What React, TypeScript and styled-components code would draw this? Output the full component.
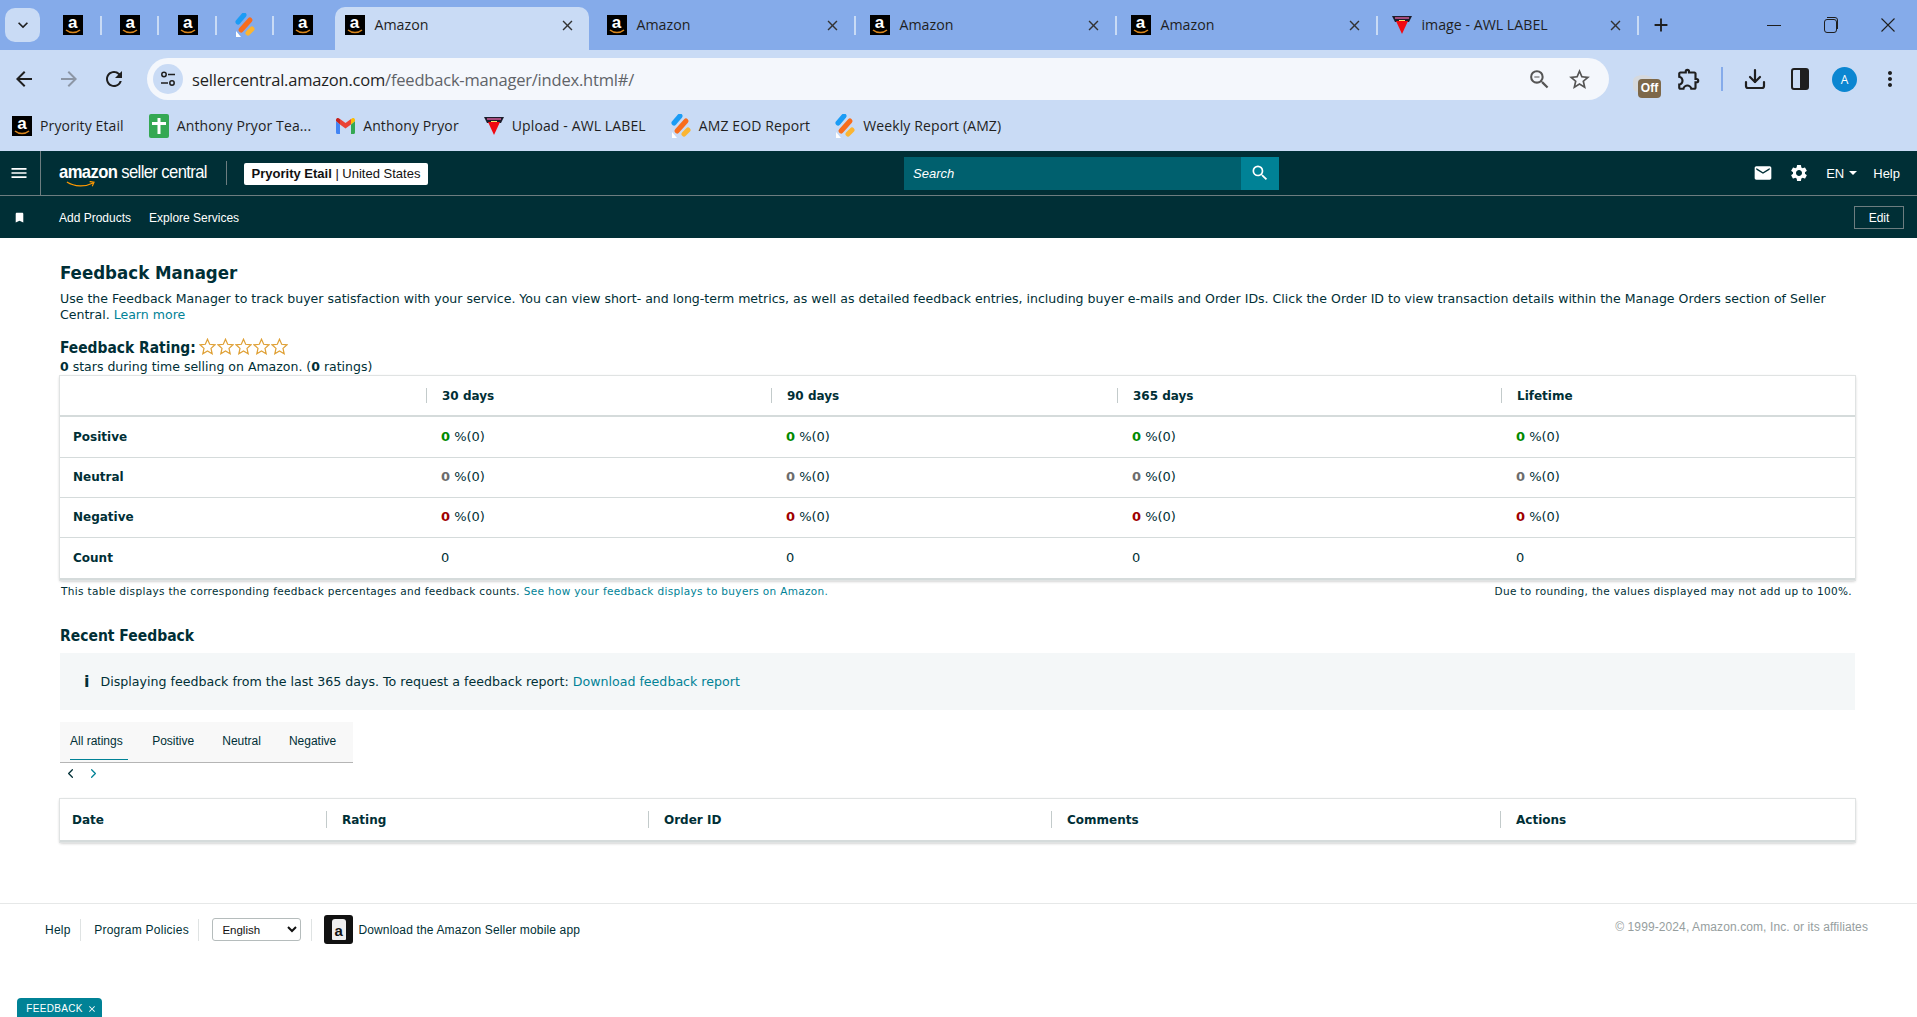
import React from "react";
import styled, { createGlobalStyle } from "styled-components";
import {
    MdArrowBack,
    MdArrowForward,
    MdBookmark,
    MdClose,
    MdExpandMore,
    MdMail,
    MdMenu,
    MdMoreVert,
    MdOutlineExtension,
    MdRefresh,
    MdSearch,
    MdSettings,
    MdStarBorder,
    MdZoomOut,
    MdAdd,
} from "react-icons/md";
import { ChevronLeft, ChevronRight, Download } from "lucide-react";

const TEXT = "#002f36";
const LINK = "#008296";
const CHROME_FONT = `"Open Sans", "Noto Sans", sans-serif`;
const BODY_FONT = `"DejaVu Sans", Verdana, sans-serif`;
const UI_FONT = `"Liberation Sans", Arial, sans-serif`;

const GlobalStyle = createGlobalStyle`
    html, body {
        margin: 0;
        padding: 0;
        background: #fff;
        overflow: hidden;
    }
    #root {
        height: 1017px;
    }
`;

/* favicons */
const AmazonBox = styled.span`
    position: relative;
    display: inline-flex;
    flex: none;
    justify-content: center;
    width: 20px;
    height: 20px;
    background: #000;
    color: #fff;
    font: bold 17px/16px "Liberation Sans", sans-serif;
    > svg {
        position: absolute;
        left: 2px;
        bottom: 1px;
        width: 16px;
        height: 5px;
    }
`;

const AmazonIcon = () => (
    <AmazonBox>
        a
        <svg viewBox="0 0 16 5">
            <path d="M1 1c4 3.400 10 3.400 14 0" fill="none" stroke="#d9861c" strokeWidth="1.600" />
        </svg>
    </AmazonBox>
);

const BarsIcon = () => (
    <svg width="20" height="24" viewBox="0 0 20 24">
        <path d="M3 9 9 2" stroke="#1b9cf5" strokeWidth="5" strokeLinecap="round" />
        <path d="M6 17 15 7" stroke="#f96d1c" strokeWidth="5" strokeLinecap="round" />
        <path d="M13 20 17 16" stroke="#fbb531" strokeWidth="5" strokeLinecap="round" />
        <path d="M1 24v-6l5 6z" fill="#fff" />
    </svg>
);

const AwlIcon = () => (
    <svg width="20" height="20" viewBox="0 0 20 20">
        <path d="M0 1h20l-3 6H3z" fill="#1d1d2b" />
        <path d="M4 6h12l-6 13z" fill="#f00a12" />
        <path d="M3 3h14" stroke="#e2619f" strokeWidth="1.400" />
        <path d="M7 5.500h6" stroke="#f5e66b" strokeWidth="1" />
    </svg>
);

const PlusSheetIcon = () => (
    <svg width="20" height="24" viewBox="0 0 20 24">
        <rect width="20" height="24" rx="2" fill="#34a853" />
        <path d="M10 4v16M3 9.500h14" stroke="#fff" strokeWidth="3" />
    </svg>
);

const GmailIcon = () => (
    <svg width="19" height="16" viewBox="0 0 19 16">
        <path d="M0 3v11.500c0 .8.600 1.500 1.400 1.500H4V6.500z" fill="#4285f4" />
        <path d="M15 6.500V16h2.600c.8 0 1.400-.7 1.400-1.500V3z" fill="#34a853" />
        <path d="M4 6.500 9.500 10.500 15 6.500V1l-5.500 4L4 1z" fill="#ea4335" />
        <path d="M0 3l4 3.500V1L2.600.2C1.400-.5 0 .5 0 2z" fill="#c5221f" />
        <path d="M19 3l-4 3.500V1l1.400-.8C17.600-.5 19 .5 19 2z" fill="#fbbc04" />
    </svg>
);

const TuneIcon = () => (
    <svg width="16" height="16" viewBox="0 0 16 16" fill="none" stroke="#1f1f1f" strokeWidth="1.500">
        <circle cx="4" cy="3.500" r="2.200" />
        <path d="M8 3.500h7M1 12h7" />
        <circle cx="12" cy="12" r="2.200" />
    </svg>
);

const PanelIcon = () => (
    <svg width="18" height="22" viewBox="0 0 18 22">
        <rect x="1" y="1" width="16" height="20" rx="2" fill="none" stroke="#1f1f1f" strokeWidth="2" />
        <rect x="9" y="1" width="8" height="20" fill="#1f1f1f" />
    </svg>
);

const RestoreIcon = () => (
    <svg width="14" height="16" viewBox="0 0 14 16" fill="none" stroke="#1f1f1f" strokeWidth="1">
        <rect x=".5" y="2.500" width="12" height="13" rx="2.500" />
        <path d="M3 .5h8a2.500 2.500 0 0 1 2.500 2.500v9" />
    </svg>
);

const MinimizeIcon = () => (
    <svg width="20" height="20" viewBox="0 0 20 20" stroke="#1f1f1f" strokeWidth="1">
        <path d="M3 10.500h14" />
    </svg>
);

const CloseThinIcon = () => (
    <svg width="20" height="20" viewBox="0 0 20 20" stroke="#1f1f1f" strokeWidth="1.100">
        <path d="M3.500 3.500l13 13M16.500 3.500l-13 13" />
    </svg>
);

const StarIcon = () => (
    <svg width="17" height="17" viewBox="0 0 17 17">
        <path
            d="M8.500 1.200 10.700 6.300 16 6.800 12 10.400 13.200 15.800 8.500 13 3.800 15.800 5 10.400 1 6.800 6.300 6.300z"
            fill="#fff"
            stroke="#dfa035"
            strokeWidth="1.200"
        />
    </svg>
);

/* browser tab strip */
const Strip = styled.div`
    display: flex;
    align-items: flex-end;
    height: 50px;
    background: #85abea;
    font-family: ${CHROME_FONT};
    color: #1f1f1f;
`;

const ListButton = styled.div`
    display: flex;
    align-items: center;
    justify-content: center;
    flex: none;
    width: 35px;
    height: 34px;
    margin: 0 4px 8px 5px;
    border-radius: 10px;
    background: #c9dbf5;
    font-size: 20px;
`;

const Pinned = styled.div<{ $sep?: boolean }>`
    position: relative;
    display: flex;
    align-items: center;
    justify-content: center;
    flex: none;
    width: 57.500px;
    height: 50px;
    &::after {
        content: "";
        display: ${(p) => (p.$sep ? "block" : "none")};
        position: absolute;
        right: 0;
        top: 16px;
        width: 2px;
        height: 19px;
        background: #c9dbf5;
    }
`;

const Tab = styled.div<{ $active?: boolean; $sep?: boolean; $width: number }>`
    position: relative;
    display: flex;
    align-items: center;
    flex: none;
    box-sizing: border-box;
    width: ${(p) => p.$width}px;
    height: ${(p) => (p.$active ? 43 : 50)}px;
    padding: 0 ${(p) => (p.$active ? 0 : 2)}px ${(p) => (p.$active ? 7 : 0)}px ${(p) => (p.$active ? 10 : 14)}px;
    margin-left: ${(p) => (p.$active ? 3 : 0)}px;
    margin-right: ${(p) => (p.$active ? 4 : 0)}px;
    background: ${(p) => (p.$active ? "#c9dbf5" : "transparent")};
    border-radius: 10px 10px 0 0;
    font-size: 14.200px;
    line-height: 18px;
    &::after {
        content: "";
        display: ${(p) => (p.$sep ? "block" : "none")};
        position: absolute;
        right: 0;
        top: 16px;
        width: 2px;
        height: 19px;
        background: #c9dbf5;
    }
`;

const TabTitle = styled.span`
    flex: 1;
    margin-left: 10px;
    margin-top: -1px;
    white-space: nowrap;
`;

const TabClose = styled.span`
    display: flex;
    margin-right: 13px;
    font-size: 17px;
    color: #333;
`;

const NewTab = styled.div`
    display: flex;
    align-items: center;
    height: 50px;
    margin-left: 11px;
    font-size: 22px;
`;

const WindowButtons = styled.div`
    display: flex;
    align-items: center;
    justify-content: space-between;
    height: 50px;
    width: 134px;
    margin-left: auto;
    margin-right: 19px;
`;

/* toolbar */
const Toolbar = styled.div`
    display: flex;
    align-items: center;
    box-sizing: border-box;
    height: 50px;
    padding: 8px 0 0 12px;
    background: #c9dbf5;
    font-size: 24px;
    color: #1f1f1f;
`;

const NavIcon = styled.span<{ $off?: boolean }>`
    display: flex;
    width: 45px;
    color: ${(p) => (p.$off ? "#8c96a5" : "#1f1f1f")};
`;

const Omnibox = styled.div`
    display: flex;
    align-items: center;
    box-sizing: border-box;
    width: 1462px;
    height: 42px;
    padding: 0 17px 0 6px;
    border-radius: 21px;
    background: #f4f7fc;
`;

const TuneBubble = styled.span`
    display: flex;
    align-items: center;
    justify-content: center;
    width: 30px;
    height: 30px;
    margin-right: 9px;
    border-radius: 50%;
    background: #c9dbf5;
`;

const Url = styled.span`
    flex: 1;
    font: 16.500px ${CHROME_FONT};
    color: #1f1f1f;
    letter-spacing: -0.2px;
    white-space: nowrap;
    > span {
        color: #5f6368;
    }
`;

const OmniIcons = styled.span`
    display: flex;
    gap: 15px;
    color: #555;
    font-size: 25px;
`;

const ExtArea = styled.div`
    display: flex;
    align-items: center;
    margin-left: 24px;
`;

const ExtOff = styled.span`
    position: relative;
    display: block;
    width: 28px;
    height: 28px;
    margin-right: 15px;
    &::before {
        content: "";
        position: absolute;
        left: 0;
        top: 10px;
        width: 20px;
        height: 18px;
        border-radius: 50%/30%;
        background: #d6d9dd;
    }
    > i {
        position: absolute;
        left: 5px;
        top: 14px;
        width: 23px;
        height: 19px;
        border-radius: 4px;
        background: #7d684a;
        color: #fff;
        text-align: center;
        font: bold 12px/19px "Liberation Sans", sans-serif;
    }
`;

const ToolSep = styled.span`
    width: 2px;
    height: 24px;
    margin: 0 9px 0 19px;
    background: #85abea;
`;

const ToolCell = styled.span`
    display: flex;
    align-items: center;
    justify-content: center;
    width: 45px;
    color: #1f1f1f;
`;

const Avatar = styled.span`
    display: flex;
    align-items: center;
    justify-content: center;
    width: 25px;
    height: 25px;
    border-radius: 50%;
    background: #0b86d1;
    color: #fff;
    font: 12px ${CHROME_FONT};
`;

/* bookmarks */
const Bookmarks = styled.div`
    display: flex;
    align-items: center;
    gap: 25px;
    height: 51px;
    padding-left: 12px;
    box-sizing: border-box;
    background: #c9dbf5;
    font: 14px ${CHROME_FONT};
    letter-spacing: 0.12px;
    color: #1f1f1f;
`;

const Bookmark = styled.div`
    display: flex;
    align-items: center;
    gap: 8px;
    white-space: nowrap;
`;

/* seller central header */
const TopNav = styled.div`
    display: flex;
    align-items: center;
    height: 45px;
    box-sizing: border-box;
    background: ${TEXT};
    border-bottom: 1px solid #6d7d80;
    color: #fff;
    font-family: ${UI_FONT};
`;

const Burger = styled.div`
    display: flex;
    align-items: center;
    justify-content: center;
    width: 41px;
    height: 100%;
    padding-right: 3px;
    border-right: 1px solid #6d7d80;
    font-size: 20px;
    box-sizing: border-box;
`;

const Logo = styled.div`
    position: relative;
    width: 160px;
    margin-left: 18px;
    font-size: 19px;
    letter-spacing: -0.7px;
    transform: translateY(-1px) scaleX(0.875);
    transform-origin: left center;
    white-space: nowrap;
    > svg {
        position: absolute;
        left: 8px;
        top: 20px;
    }
`;

const Divider = styled.span`
    width: 1px;
    height: 24px;
    margin: 0 17px 0 7px;
    background: #6d7d80;
`;

const Merchant = styled.div`
    display: flex;
    align-items: center;
    justify-content: center;
    box-sizing: border-box;
    width: 184px;
    height: 22px;
    margin-top: 1px;
    border-radius: 2px;
    background: #fff;
    color: #111;
    font-size: 13px;
    white-space: nowrap;
`;

const SearchBox = styled.div`
    display: flex;
    align-items: center;
    width: 375px;
    height: 33px;
    margin-left: 476px;
    background: #00606e;
    > span {
        flex: 1;
        padding: 1px 0 0 9px;
        font: italic 13px ${UI_FONT};
    }
`;

const SearchButton = styled.div`
    display: flex;
    align-items: center;
    justify-content: center;
    width: 38px;
    height: 33px;
    background: ${LINK};
    font-size: 20px;
`;

const NavRight = styled.div`
    display: flex;
    align-items: center;
    margin-left: auto;
    padding-right: 17px;
    font-size: 13px;
`;

const NavIconBox = styled.span<{ $right: number }>`
    display: flex;
    font-size: 20px;
    margin-right: ${(p) => p.$right}px;
`;

const Caret = styled.span`
    width: 0;
    height: 0;
    margin: 0 16px 0 5px;
    border: 4px solid transparent;
    border-top: 4px solid #fff;
    border-bottom: 0;
`;

const SubNav = styled.div`
    display: flex;
    align-items: center;
    box-sizing: border-box;
    height: 42px;
    padding-top: 1px;
    background: ${TEXT};
    color: #fff;
    font: 12px ${UI_FONT};
`;

const BookmarkBtn = styled.span`
    display: flex;
    justify-content: center;
    width: 38px;
    margin-right: 21px;
    font-size: 13px;
`;

const SubLink = styled.span`
    margin-right: 18px;
`;

const EditButton = styled.span`
    display: flex;
    align-items: center;
    justify-content: center;
    width: 50px;
    height: 23px;
    box-sizing: border-box;
    margin-left: auto;
    margin-right: 13px;
    border: 1px solid #6d7d80;
`;

/* page */
const Main = styled.main`
    padding: 23px 62px 0 60px;
    font: 13px/16px ${BODY_FONT};
    color: ${TEXT};
`;

const Title = styled.h1`
    margin: 0 0 6px;
    font: bold 18.500px/24px ${BODY_FONT};
    font-stretch: condensed;
`;

const Intro = styled.p`
    margin: 0;
    font-size: 12.550px;
    line-height: 16px;
`;

const Link = styled.a`
    color: ${LINK};
`;

const RatingRow = styled.div`
    display: flex;
    align-items: center;
    height: 22px;
    margin-top: 14px;
    font: bold 15.400px/20px ${BODY_FONT};
    font-stretch: condensed;
`;

const Stars = styled.span`
    display: flex;
    gap: 1px;
    margin-left: 3px;
    margin-top: -3px;
`;

const Summary = styled.div`
    font-size: 12.500px;
    line-height: 16px;
    height: 17px;
`;

const Card = styled.table`
    width: 100%;
    border-collapse: collapse;
    table-layout: fixed;
    box-shadow: 0 1px 3px rgba(0, 0, 0, 0.3);
    outline: 1px solid #e0e3e3;
    font-size: 13px;
`;

const Row = styled.tr<{ $h: number }>`
    height: ${(p) => p.$h}px;
    border-bottom: 1px solid #d5dbdb;
    &:last-child {
        border-bottom: 2px solid #d5dbdb;
    }
`;

const Head = styled.th<{ $sep?: boolean }>`
    position: relative;
    padding: 0 0 0 ${(p) => (p.$sep ? 16 : 12)}px;
    text-align: left;
    font-weight: bold;
    font-size: 12px;
    &::before {
        content: "";
        display: ${(p) => (p.$sep ? "block" : "none")};
        position: absolute;
        left: 0;
        top: 12px;
        bottom: 12px;
        width: 1px;
        background: #c3cbcb;
    }
`;

const RowLabel = styled.td`
    padding-left: 13px;
    font-size: 12px;
    font-weight: bold;
`;

const Cell = styled.td`
    padding-left: 15px;
`;

const Score = styled.b<{ $color: string }>`
    color: ${(p) => p.$color};
`;

const Notes = styled.div`
    display: flex;
    justify-content: space-between;
    margin-top: 4px;
    padding: 0 3px 0 1px;
    font-size: 10.500px;
    line-height: 14px;
    letter-spacing: 0.33px;
`;

const Recent = styled.h2`
    margin: 28px 0 7px;
    font: bold 15.500px/20px ${BODY_FONT};
    font-stretch: condensed;
`;

const InfoBox = styled.div`
    display: flex;
    align-items: center;
    height: 57px;
    padding-left: 24px;
    background: #f4f7f8;
    font-size: 12.620px;
    > b {
        margin-right: 11px;
        font-size: 16px;
    }
`;

const TabBar = styled.div`
    display: flex;
    width: 283px;
    height: 40px;
    margin-top: 12px;
    padding-left: 10px;
    gap: 28px;
    background: #f8f8f8;
    border-bottom: 1px solid #b5b5b5;
    font: 12px ${UI_FONT};
`;

const TabItem = styled.span<{ $active?: boolean }>`
    display: flex;
    align-items: center;
    height: 38px;
    box-sizing: border-box;
    padding-right: ${(p) => (p.$active ? 5 : 0)}px;
    margin-right: ${(p) => (p.$active ? -3.5 : 0)}px;
    border-bottom: 1px solid ${(p) => (p.$active ? LINK : "transparent")};
`;

const Pager = styled.div`
    display: flex;
    gap: 8px;
    height: 20px;
    margin: 0 0 16px;
    padding-left: 3px;
    align-items: center;
    > svg:last-child {
        color: ${LINK};
    }
`;

const Footer = styled.footer`
    display: flex;
    align-items: center;
    box-sizing: border-box;
    height: 52px;
    margin-top: 61px;
    padding: 0 49px 0 45px;
    border-top: 1px solid #e6e8e8;
    font: 12px ${UI_FONT};
    letter-spacing: 0.25px;
    color: ${TEXT};
`;

const FootLink = styled.span`
    display: flex;
    align-items: center;
    height: 22px;
    padding-right: 9.500px;
    margin-right: 13px;
    border-right: 1px solid #dfe3e3;
`;

const LangSelect = styled.select`
    width: 89px;
    height: 23px;
    padding-left: 5px;
    margin-right: 10px;
    border: 1px solid #b5bcbc;
    border-radius: 3px;
    background: #fff;
    font: 11.500px ${UI_FONT};
    color: #111;
`;

const FootSep = styled.span`
    width: 1px;
    height: 22px;
    margin-right: 12px;
    background: #dfe3e3;
`;

const AppIcon = styled.span`
    display: flex;
    flex: none;
    align-items: center;
    justify-content: center;
    width: 29px;
    height: 29px;
    margin-right: 5px;
    border-radius: 3px;
    background: #111;
    > span {
        width: 14px;
        height: 21px;
        border-radius: 3px 3px 1px 1px;
        background: #eee;
        color: #111;
        text-align: center;
        font: bold 15px/24px "Liberation Sans", sans-serif;
    }
`;

const AppText = styled.span`
    letter-spacing: 0.15px;
`;

const Copyright = styled.span`
    margin-left: auto;
    margin-top: -5px;
    color: #969e9e;
    font-size: 12px;
    letter-spacing: 0.1px;
`;

const FeedbackTab = styled.div`
    position: fixed;
    left: 17px;
    bottom: 0;
    display: flex;
    align-items: center;
    justify-content: center;
    box-sizing: border-box;
    width: 85px;
    height: 19px;
    gap: 4px;
    padding: 2px 0 0 4px;
    border-radius: 4px 4px 0 0;
    background: ${LINK};
    color: #fff;
    font: 10px ${UI_FONT};
    letter-spacing: 0.3px;
`;

const pct = (color: string) => (
    <>
        <Score $color={color}>0</Score> %(0)
    </>
);

const rows: { label: string; color: string; h: number }[] = [
    { label: "Positive", color: "#008a00", h: 41 },
    { label: "Neutral", color: "#6c6c6c", h: 40 },
    { label: "Negative", color: "#a00000", h: 40 },
];

const App: React.FC = () => {
    return (
        <>
            <GlobalStyle />
            <Strip>
                <ListButton>
                    <MdExpandMore />
                </ListButton>
                <Pinned $sep><AmazonIcon /></Pinned>
                <Pinned $sep><AmazonIcon /></Pinned>
                <Pinned $sep><AmazonIcon /></Pinned>
                <Pinned $sep><BarsIcon /></Pinned>
                <Pinned><AmazonIcon /></Pinned>
                <Tab $active $width={254}>
                    <AmazonIcon />
                    <TabTitle>Amazon</TabTitle>
                    <TabClose><MdClose /></TabClose>
                </Tab>
                <Tab $sep $width={263}>
                    <AmazonIcon />
                    <TabTitle>Amazon</TabTitle>
                    <TabClose><MdClose /></TabClose>
                </Tab>
                <Tab $sep $width={261}>
                    <AmazonIcon />
                    <TabTitle>Amazon</TabTitle>
                    <TabClose><MdClose /></TabClose>
                </Tab>
                <Tab $sep $width={261}>
                    <AmazonIcon />
                    <TabTitle>Amazon</TabTitle>
                    <TabClose><MdClose /></TabClose>
                </Tab>
                <Tab $sep $width={261}>
                    <AwlIcon />
                    <TabTitle>image - AWL LABEL</TabTitle>
                    <TabClose><MdClose /></TabClose>
                </Tab>
                <NewTab><MdAdd /></NewTab>
                <WindowButtons>
                    <MinimizeIcon />
                    <RestoreIcon />
                    <CloseThinIcon />
                </WindowButtons>
            </Strip>
            <Toolbar>
                <NavIcon><MdArrowBack /></NavIcon>
                <NavIcon $off><MdArrowForward /></NavIcon>
                <NavIcon><MdRefresh /></NavIcon>
                <Omnibox>
                    <TuneBubble><TuneIcon /></TuneBubble>
                    <Url>sellercentral.amazon.com<span>/feedback-manager/index.html#/</span></Url>
                    <OmniIcons>
                        <MdZoomOut />
                        <MdStarBorder />
                    </OmniIcons>
                </Omnibox>
                <ExtArea>
                    <ExtOff><i>Off</i></ExtOff>
                    <MdOutlineExtension size={26} />
                    <ToolSep />
                    <ToolCell><Download size={24} strokeWidth={2.2} /></ToolCell>
                    <ToolCell><PanelIcon /></ToolCell>
                    <ToolCell><Avatar>A</Avatar></ToolCell>
                    <ToolCell><MdMoreVert size={24} /></ToolCell>
                </ExtArea>
            </Toolbar>
            <Bookmarks>
                <Bookmark><AmazonIcon />Pryority Etail</Bookmark>
                <Bookmark><PlusSheetIcon />Anthony Pryor Tea...</Bookmark>
                <Bookmark><GmailIcon />Anthony Pryor</Bookmark>
                <Bookmark><AwlIcon />Upload - AWL LABEL</Bookmark>
                <Bookmark><BarsIcon />AMZ EOD Report</Bookmark>
                <Bookmark><BarsIcon />Weekly Report (AMZ)</Bookmark>
            </Bookmarks>
            <TopNav>
                <Burger><MdMenu /></Burger>
                <Logo>
                    <b>amazon</b> seller central
                    <svg width="34" height="7" viewBox="0 0 34 7">
                        <path d="M1 1c9 5 21 5 30 1M27 .5l5 .7-2 4" fill="none" stroke="#f90" strokeWidth="1.300" />
                    </svg>
                </Logo>
                <Divider />
                <Merchant><b>Pryority Etail</b>&nbsp;| United States</Merchant>
                <SearchBox>
                    <span>Search</span>
                    <SearchButton><MdSearch /></SearchButton>
                </SearchBox>
                <NavRight>
                    <NavIconBox $right={16}><MdMail /></NavIconBox>
                    <NavIconBox $right={17}><MdSettings /></NavIconBox>
                    EN<Caret />Help
                </NavRight>
            </TopNav>
            <SubNav>
                <BookmarkBtn><MdBookmark /></BookmarkBtn>
                <SubLink>Add Products</SubLink>
                <SubLink>Explore Services</SubLink>
                <EditButton>Edit</EditButton>
            </SubNav>
            <Main>
                <Title>Feedback Manager</Title>
                <Intro>
                    Use the Feedback Manager to track buyer satisfaction with your service. You can view short- and
                    long-term metrics, as well as detailed feedback entries, including buyer e-mails and Order IDs.
                    Click the Order ID to view transaction details within the Manage Orders section of Seller Central.{" "}
                    <Link>Learn more</Link>
                </Intro>
                <RatingRow>
                    Feedback Rating:
                    <Stars>
                        {[0, 1, 2, 3, 4].map((i) => (
                            <StarIcon key={i} />
                        ))}
                    </Stars>
                </RatingRow>
                <Summary>
                    <b>0</b> stars during time selling on Amazon. (<b>0</b> ratings)
                </Summary>
                <Card>
                    <colgroup>
                        <col style={{ width: 366 }} />
                        <col style={{ width: 345 }} />
                        <col style={{ width: 346 }} />
                        <col style={{ width: 384 }} />
                        <col />
                    </colgroup>
                    <thead>
                        <Row $h={40}>
                            <Head />
                            <Head $sep>30 days</Head>
                            <Head $sep>90 days</Head>
                            <Head $sep>365 days</Head>
                            <Head $sep>Lifetime</Head>
                        </Row>
                    </thead>
                    <tbody>
                        {rows.map((r) => (
                            <Row $h={r.h} key={r.label}>
                                <RowLabel>{r.label}</RowLabel>
                                <Cell>{pct(r.color)}</Cell>
                                <Cell>{pct(r.color)}</Cell>
                                <Cell>{pct(r.color)}</Cell>
                                <Cell>{pct(r.color)}</Cell>
                            </Row>
                        ))}
                        <Row $h={42}>
                            <RowLabel>Count</RowLabel>
                            <Cell>0</Cell>
                            <Cell>0</Cell>
                            <Cell>0</Cell>
                            <Cell>0</Cell>
                        </Row>
                    </tbody>
                </Card>
                <Notes>
                    <span>
                        This table displays the corresponding feedback percentages and feedback counts.{" "}
                        <Link>See how your feedback displays to buyers on Amazon.</Link>
                    </span>
                    <span>Due to rounding, the values displayed may not add up to 100%.</span>
                </Notes>
                <Recent>Recent Feedback</Recent>
                <InfoBox>
                    <b>i</b>
                    <span>
                        Displaying feedback from the last 365 days. To request a feedback report:{" "}
                        <Link>Download feedback report</Link>
                    </span>
                </InfoBox>
                <TabBar>
                    <TabItem $active>All ratings</TabItem>
                    <TabItem>Positive</TabItem>
                    <TabItem>Neutral</TabItem>
                    <TabItem>Negative</TabItem>
                </TabBar>
                <Pager>
                    <ChevronLeft size={15} />
                    <ChevronRight size={15} />
                </Pager>
                <Card>
                    <colgroup>
                        <col style={{ width: 266 }} />
                        <col style={{ width: 322 }} />
                        <col style={{ width: 403 }} />
                        <col style={{ width: 449 }} />
                        <col />
                    </colgroup>
                    <thead>
                        <Row $h={42}>
                            <Head>Date</Head>
                            <Head $sep>Rating</Head>
                            <Head $sep>Order ID</Head>
                            <Head $sep>Comments</Head>
                            <Head $sep>Actions</Head>
                        </Row>
                    </thead>
                </Card>
            </Main>
            <Footer>
                <FootLink>Help</FootLink>
                <FootLink>Program Policies</FootLink>
                <LangSelect defaultValue="English">
                    <option>English</option>
                </LangSelect>
                <FootSep />
                <AppIcon><span>a</span></AppIcon>
                <AppText>Download the Amazon Seller mobile app</AppText>
                <Copyright>© 1999-2024, Amazon.com, Inc. or its affiliates</Copyright>
            </Footer>
            <FeedbackTab>FEEDBACK <MdClose size={10} /></FeedbackTab>
        </>
    );
};

export default App;
